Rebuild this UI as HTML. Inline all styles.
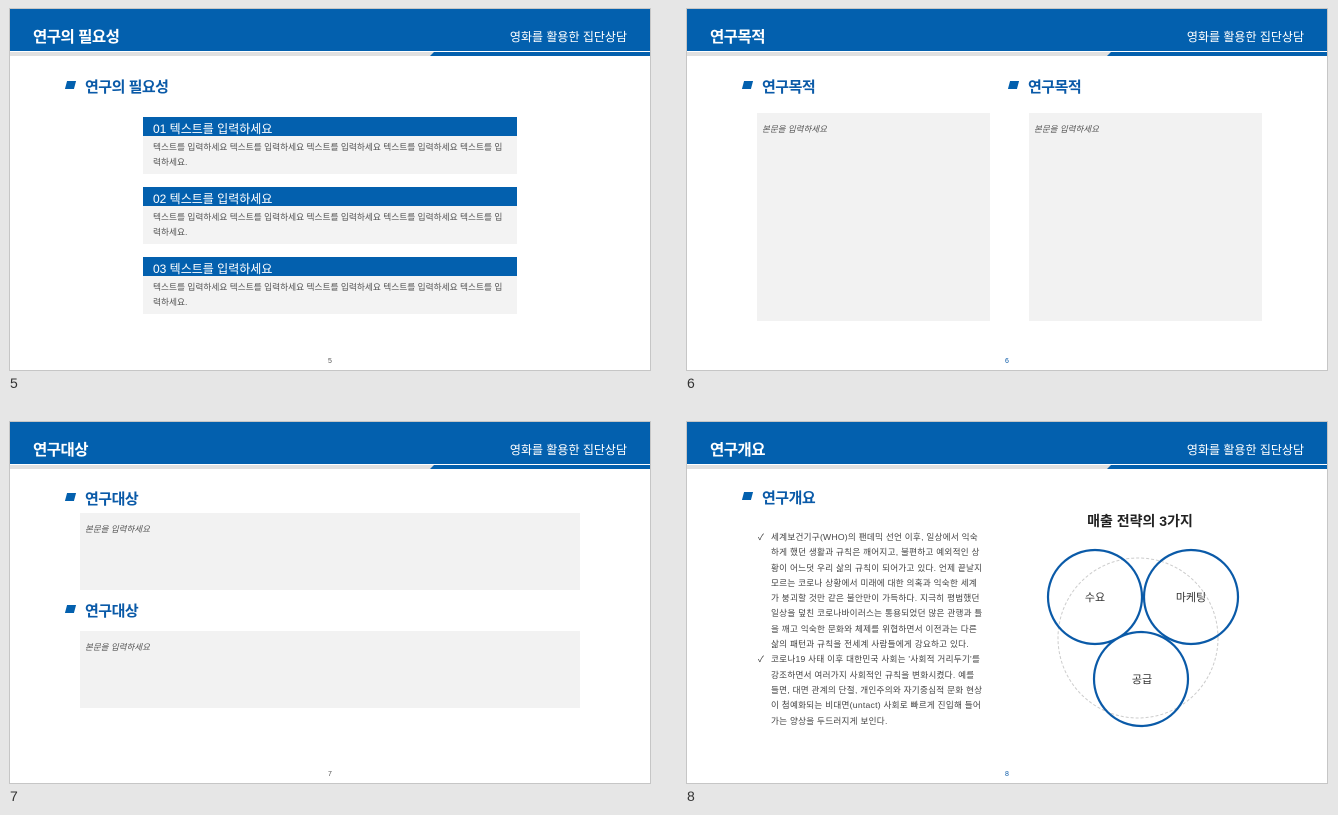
<!DOCTYPE html>
<html><head><meta charset="utf-8"><style>
*{margin:0;padding:0;box-sizing:border-box}
body{width:1338px;height:815px;background:#e6e6e6;position:relative;overflow:hidden;font-family:"Liberation Sans","Noto Sans CJK KR",sans-serif}
.s{position:absolute;width:642px;height:363px;background:#fff;border:1px solid #c6c6c6;overflow:hidden}
.hd{position:absolute;left:0;top:0;width:640px;height:42px;background:#0360ae}
.hd .t{position:absolute;left:23px;top:16px;color:#fff;font-size:15.5px;font-weight:bold;letter-spacing:-0.5px}
.hd .r{position:absolute;right:23px;top:19px;color:#fff;font-size:12px}
.st{position:absolute;left:0;top:43px;width:640px;height:4px;background:#e0e0e0}
.st i{position:absolute;left:420px;top:0;width:220px;height:4px;background:#0360ae;clip-path:polygon(4px 0,100% 0,100% 100%,0 100%)}
.h{position:absolute;color:#0a5aa8;font-size:15px;font-weight:bold;letter-spacing:-0.5px}
.h:before{content:"";position:absolute;left:-19px;top:5px;width:9px;height:8px;background:#0360ae;transform:skewX(-15deg)}
.pn{position:absolute;top:349px;font-size:7px;color:#555}
.lbl{position:absolute;font-size:14px;color:#333}
.gb{position:absolute;background:#f2f2f2}
.gb span{position:absolute;left:5px;top:10px;font-size:8.5px;font-style:italic;color:#555}
.bh{position:absolute;left:133px;width:374px;height:19px;background:#0360ae;color:#fff;font-size:12px;padding:3px 0 0 10px}
.bb{position:absolute;left:133px;width:374px;height:38px;background:#f3f3f3;color:#555;font-size:8.7px;line-height:15px;padding:4px 14px 0 10px}
.ls{position:absolute;left:84px;top:108px;width:214px;font-size:8.6px;line-height:15.3px;color:#444;letter-spacing:0.25px}
.ls p{position:relative;margin-left:0}
.ls p:before{content:"✓";position:absolute;left:-13px;color:#333}
</style></head><body>

<div class="s" style="left:9px;top:8px">
<div class="hd"><div class="t">연구의 필요성</div><div class="r">영화를 활용한 집단상담</div></div>
<div class="st"><i></i></div>
<div class="h" style="left:75px;top:67px">연구의 필요성</div>
<div class="bh" style="top:108px">01 텍스트를 입력하세요</div>
<div class="bb" style="top:127px">텍스트를 입력하세요 텍스트를 입력하세요 텍스트를 입력하세요 텍스트를 입력하세요 텍스트를 입력하세요.</div>
<div class="bh" style="top:178px">02 텍스트를 입력하세요</div>
<div class="bb" style="top:197px">텍스트를 입력하세요 텍스트를 입력하세요 텍스트를 입력하세요 텍스트를 입력하세요 텍스트를 입력하세요.</div>
<div class="bh" style="top:248px">03 텍스트를 입력하세요</div>
<div class="bb" style="top:267px">텍스트를 입력하세요 텍스트를 입력하세요 텍스트를 입력하세요 텍스트를 입력하세요 텍스트를 입력하세요.</div>
<div class="pn" style="left:318px">5</div>
</div>
<div class="lbl" style="left:10px;top:375px">5</div>

<div class="s" style="left:686px;top:8px">
<div class="hd"><div class="t">연구목적</div><div class="r">영화를 활용한 집단상담</div></div>
<div class="st"><i></i></div>
<div class="h" style="left:75px;top:67px">연구목적</div>
<div class="h" style="left:341px;top:67px">연구목적</div>
<div class="gb" style="left:70px;top:104px;width:233px;height:208px"><span>본문을 입력하세요</span></div>
<div class="gb" style="left:342px;top:104px;width:233px;height:208px"><span>본문을 입력하세요</span></div>
<div class="pn" style="left:318px;color:#0a5aa8">6</div>
</div>
<div class="lbl" style="left:687px;top:375px">6</div>

<div class="s" style="left:9px;top:421px">
<div class="hd"><div class="t">연구대상</div><div class="r">영화를 활용한 집단상담</div></div>
<div class="st"><i></i></div>
<div class="h" style="left:75px;top:66px">연구대상</div>
<div class="gb" style="left:70px;top:91px;width:500px;height:77px"><span>본문을 입력하세요</span></div>
<div class="h" style="left:75px;top:178px">연구대상</div>
<div class="gb" style="left:70px;top:209px;width:500px;height:77px"><span>본문을 입력하세요</span></div>
<div class="pn" style="left:318px">7</div>
</div>
<div class="lbl" style="left:10px;top:788px">7</div>

<div class="s" style="left:686px;top:421px">
<div class="hd"><div class="t">연구개요</div><div class="r">영화를 활용한 집단상담</div></div>
<div class="st"><i></i></div>
<div class="h" style="left:75px;top:65px">연구개요</div>
<div class="ls">
<p>세계보건기구(WHO)의 팬데믹 선언 이후, 일상에서 익숙하게 했던 생활과 규칙은 깨어지고, 불편하고 예외적인 상황이 어느덧 우리 삶의 규칙이 되어가고 있다. 언제 끝날지 모르는 코로나 상황에서 미래에 대한 의혹과 익숙한 세계가 붕괴할 것만 같은 불안만이 가득하다. 지극히 평범했던 일상을 덮친 코로나바이러스는 통용되었던 많은 관행과 틀을 깨고 익숙한 문화와 체제를 위협하면서 이전과는 다른 삶의 패턴과 규칙을 전세계 사람들에게 강요하고 있다.</p>
<p>코로나19 사태 이후 대한민국 사회는 '사회적 거리두기'를 강조하면서 여러가지 사회적인 규칙을 변화시켰다. 예를 들면, 대면 관계의 단절, 개인주의와 자기중심적 문화 현상이 첨예화되는 비대면(untact) 사회로 빠르게 진입해 들어가는 양상을 두드러지게 보인다.</p>
</div>
<div style="position:absolute;left:353px;top:89px;width:200px;text-align:center;font-size:14px;font-weight:bold;color:#222">매출 전략의 3가지</div>
<svg style="position:absolute;left:0;top:0" width="640" height="361">
<circle cx="451" cy="216" r="80" fill="none" stroke="#ccc" stroke-dasharray="3 2"/>
<g fill="none" stroke="#0a5aa8" stroke-width="2.2">
<circle cx="408" cy="175" r="47"/><circle cx="504" cy="175" r="47"/><circle cx="454" cy="257" r="47"/></g>
<g font-size="11" fill="#333" text-anchor="middle" font-family="Liberation Sans,Noto Sans CJK KR,sans-serif">
<text x="408" y="179">수요</text><text x="504" y="179">마케팅</text><text x="455" y="261">공급</text></g>
</svg>
<div class="pn" style="left:318px;color:#0a5aa8">8</div>
</div>
<div class="lbl" style="left:687px;top:788px">8</div>
</body></html>
